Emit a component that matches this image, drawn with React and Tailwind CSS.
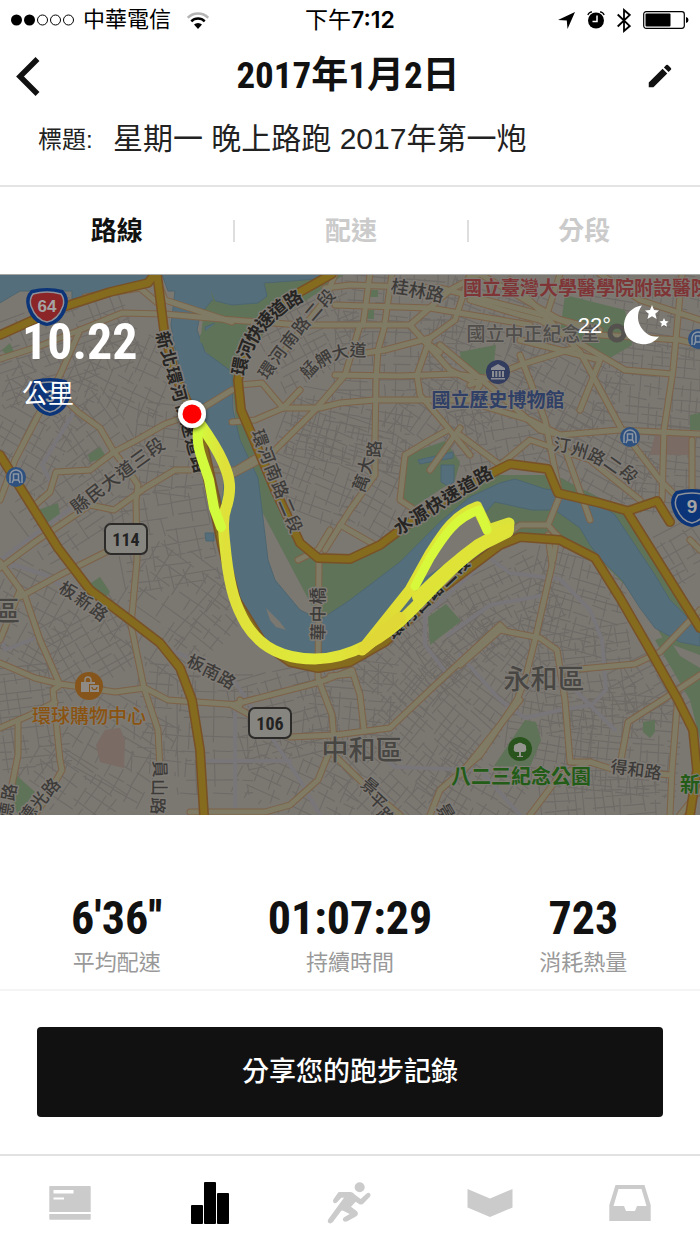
import React from "react";
import { MdEdit } from "react-icons/md";

const NARROW = "font-['Liberation_Sans_Narrow','Roboto_Condensed','Liberation_Sans','Noto_Sans_CJK_TC',sans-serif]";

/* ---------- map geometry ---------- */

const MAJOR = [
  // north-west (Banqiao)
  "M0 359 L40 346 L80 330 L122 313 L165 314 L232 320",
  "M80 330 L60 375 L45 402 L15 460 L0 500",
  "M60 395 L78 412 L100 428 L114 452",
  "M0 640 L20 590",
  "M35 505 L50 492 L56 472 L90 470 L114 452 L137 440 L165 424 L193 414 L232 390",
  "M0 568 L35 542 L90 505 L114 510 L145 488 L175 470 L240 470",
  "M114 452 L128 470 L138 485 L136 500 L137 560 L131 625 L144 688 L158 730 L160 770",
  "M0 562 L25 596 L40 640 L60 685 L53 690 L60 760 L62 770 L45 800 L35 815",
  "M20 597 L60 575 L110 550 L137 540",
  "M0 663 L35 678 L60 684 L115 692 L145 688 L168 700 L240 705 L240 700",
  "M0 728 L30 715 L55 702",
  "M18 722 L18 755 L10 795",
  "M155 274 L165 300 L232 322",
  "M85 297 L140 288 L160 305",
  // Wanhua
  "M232 320 L300 325 L410 325 L425 342 L440 352",
  "M325 288 L350 285 L440 288 L600 330",
  "M335 274 L325 300 L285 350",
  "M370 274 L363 325 M392 274 L385 322",
  "M360 325 L345 375 L315 410 L270 455 L232 475",
  "M385 325 L378 350 L376 380 L375 440",
  "M352 355 L385 350 L430 338 L455 320 L470 274",
  "M335 305 L430 308 L530 325",
  "M410 325 L450 290 L480 274",
  "M425 342 L450 370 L480 385 L470 400 L375 400 L340 403 L320 408 L283 408",
  "M335 375 L400 376 L455 374 L500 380",
  "M240 385 L262 383 L283 408 L255 420 L232 422 M283 408 L300 390",
  "M430 338 L417 375 L420 395 L448 428 L470 455",
  "M440 345 L500 395 L540 430 L560 435 L620 430 L700 434",
  "M470 300 L520 315 L540 320 L625 370 L672 374",
  "M480 274 L560 320 L600 335 L680 340 L700 345",
  "M510 280 L580 352 L622 430 L660 480 L700 520",
  "M520 340 L600 360 L580 410",
  "M470 385 L520 365 L575 348",
  "M480 405 L530 420 L560 435 L590 520",
  "M520 355 L545 420 L560 495 L548 525",
  "M460 435 L500 465 L530 440 L590 460 L640 500",
  "M448 430 L430 440 L405 455 L400 500 L415 510",
  "M460 428 L430 470",
  "M375 440 L375 475 L350 510 L325 550",
  "M232 472 L260 455",
  "M682 274 L673 370 L664 430 L662 500",
  "M560 274 L545 320 M600 274 L640 300 L700 320",
  "M340 525 L375 545",
  "M692 440 L692 500 L700 520",
  "M548 525 L520 525 L500 540 M548 525 L565 545",
  // river crossings and Zhonghe
  "M319 560 L318 678 L332 715 L334 740",
  "M298 560 L318 550 L330 530",
  "M232 705 L320 682 L352 670 L360 695 L364 730",
  "M232 705 L290 737 L335 735 L390 728 L430 690 L500 625 L505 630",
  "M334 740 L318 780 L290 805 L265 812 L190 812",
  "M352 674 L330 676 M334 755 L370 790 L400 815",
  "M460 665 L500 630 L540 638 L557 650 L565 700 L570 762 L590 762 L615 770 L670 775",
  "M548 535 L552 565 L535 640 L525 680 L517 700 L480 755 L440 790 L430 815",
  "M557 535 L553 560",
  "M580 669 L635 664 L660 652 L700 610",
  "M460 775 L520 700",
  "M700 675 L670 695 L628 722 L620 765",
  "M678 695 L672 770 L670 815",
  "M530 815 L560 775 L590 762",
  "M700 790 L680 815 M690 540 L700 550",
];

const HIGHWAY = [
  "M0 335 L60 308 L110 292 L148 283 L155 274",
  "M157 274 L164 330 L175 375 L200 430 L220 520",
  "M0 455 L28 500 L58 548 L90 590 L130 620 L160 643 L180 668 L192 700 L200 750 L204 815",
  "M332 274 L300 292 L265 318 L245 350 L238 380 L241 410 L254 440 L275 490 L300 543 L318 558 L350 559 L380 545 L420 515 L460 490 L492 473 L510 464 L548 469 L558 493 L600 503 L628 511 L657 501 L670 522",
  "M628 513 L700 628",
  "M205 465 L222 545 L236 600 L262 642 L290 662 L318 668 L350 662 L385 642 L440 590 L500 545 L520 537 L560 540 L595 558 L620 598 L650 650 L678 700 L693 730 L697 770 L690 815",
];

const GREY_ROADS = [
  "M0 570 L15 565 L45 575 L80 597 M170 650 L195 660 M0 632 L5 650 L38 637",
  "M0 560 L75 505 M42 465 L75 410 M42 465 L52 485",
  "M235 682 L270 735 L300 780 L320 815 M200 761 L290 761 M235 705 L235 815",
  "M425 610 L425 645 L448 675 M425 615 L470 575 L488 557 L510 573 L560 579 L590 610 L602 640 L606 690 L592 705 L560 710 L525 718 L500 700 L460 655",
  "M575 690 L615 730 M380 755 L395 767 L480 770 L520 815 M448 635 L490 605 L545 595",
];

// Local street grids: centre, half extents, angle, step
const BLOCKS = [
  [60, 345, 75, 42, -20, 9], [125, 370, 48, 42, 25, 8], [30, 430, 42, 55, 30, 9], [95, 440, 45, 35, 55, 9],
  [165, 450, 32, 45, 8, 8], [70, 510, 50, 38, -35, 9], [165, 540, 48, 50, -10, 10], [30, 620, 42, 50, 28, 9],
  [90, 645, 45, 40, -30, 8], [170, 610, 48, 60, 35, 12], [28, 720, 38, 55, -8, 8], [115, 745, 50, 45, 30, 9],
  [165, 720, 30, 55, 5, 10], [215, 735, 38, 60, 0, 12], [70, 790, 50, 28, 35, 9], [210, 625, 22, 40, 40, 9],
  [310, 330, 50, 45, -28, 7], [400, 300, 60, 35, 5, 8], [400, 360, 65, 40, 0, 8], [320, 465, 50, 55, 20, 7],
  [350, 430, 60, 35, 10, 7], [440, 420, 45, 42, 35, 9], [385, 490, 30, 45, 28, 7], [500, 330, 60, 45, 20, 8],
  [560, 380, 60, 45, 30, 8], [500, 430, 50, 35, -10, 7], [640, 310, 60, 40, 8, 8], [650, 390, 55, 45, 5, 8],
  [600, 460, 55, 35, 28, 7], [665, 470, 40, 45, 5, 7], [670, 560, 38, 28, -30, 8],
  [285, 715, 50, 45, -15, 9], [350, 705, 45, 45, 5, 8], [400, 665, 50, 40, 40, 8], [450, 640, 42, 45, -35, 8],
  [510, 600, 45, 38, -25, 7], [575, 600, 48, 50, 15, 7], [490, 665, 50, 45, 38, 7], [585, 680, 50, 50, -8, 7],
  [430, 735, 55, 45, 40, 7], [300, 785, 60, 35, 25, 8], [380, 790, 50, 30, 42, 8], [470, 790, 50, 32, 30, 7],
  [550, 740, 45, 45, 10, 7], [630, 745, 50, 50, 5, 7], [600, 795, 60, 25, -5, 7], [650, 690, 35, 35, -30, 8],
];

function buildStreets() {
  let seed = 7;
  const rnd = () => {
    seed = (seed * 16807) % 2147483647;
    return seed / 2147483647;
  };
  let d = "";
  for (const [cx, cy, hw, hh, angle, step] of BLOCKS) {
    const a = (angle * Math.PI) / 180;
    const c = Math.cos(a);
    const s = Math.sin(a);
    const put = (x1, y1, x2, y2) => {
      const p = (x, y) => `${(cx + x * c - y * s).toFixed(1)} ${(cy + x * s + y * c).toFixed(1)}`;
      d += `M${p(x1, y1)}L${p(x2, y2)}`;
    };
    for (let y = -hh; y < hh; y += step * (0.8 + rnd() * 0.9)) {
      let x = -hw + rnd() * 12;
      while (x < hw) {
        const len = 14 + rnd() * 42;
        put(x, y, Math.min(x + len, hw), y + rnd() * 3 - 1);
        x += len + rnd() * 14;
      }
    }
    for (let x = -hw; x < hw; x += step * (0.9 + rnd() * 1.1)) {
      let y = -hh + rnd() * 12;
      while (y < hh) {
        const len = 10 + rnd() * 30;
        put(x, y, x + rnd() * 3 - 1, Math.min(y + len, hh));
        y += len + rnd() * 16;
      }
    }
  }
  return d;
}
const STREETS = buildStreets();

/* Road name whose characters run from one point to another, each turned by its own angle. */
function RoadName({ text, from, to, bend = 0, turn, size = 17, bold = false, dark = false }) {
  const chars = Array.from(text);
  const n = chars.length;
  const dx = to[0] - from[0];
  const dy = to[1] - from[1];
  const len = Math.hypot(dx, dy);
  const xs = [];
  const ys = [];
  const rs = [];
  chars.forEach((_, i) => {
    const t = n === 1 ? 0 : i / (n - 1);
    const off = bend * 4 * t * (1 - t);
    const mx = from[0] + dx * t - (dy / len) * off;
    const my = from[1] + dy * t + (dx / len) * off;
    const deg = turn[0] + (turn[1] - turn[0]) * t;
    const r = (deg * Math.PI) / 180;
    const ox = -size / 2;
    const oy = size * 0.37;
    xs.push((mx + ox * Math.cos(r) - oy * Math.sin(r)).toFixed(1));
    ys.push((my + ox * Math.sin(r) + oy * Math.cos(r)).toFixed(1));
    rs.push(deg.toFixed(1));
  });
  return (
    <text
      x={xs.join(" ")}
      y={ys.join(" ")}
      rotate={rs.join(" ")}
      fontSize={size}
      fontWeight={bold ? 700 : 500}
      fill={dark ? "#262523" : "#3d3b39"}
      stroke="#807c76"
      strokeWidth="3"
      paintOrder="stroke"
      strokeLinejoin="round"
    >
      {text}
    </text>
  );
}

function PlaceName({ x, y, size, fill, weight = 500, children, anchor = "middle" }) {
  return (
    <text x={x} y={y} fontSize={size} fontWeight={weight} fill={fill} textAnchor={anchor} stroke="#807c76" strokeWidth="2" paintOrder="stroke">
      {children}
    </text>
  );
}

function Metro({ x, y }) {
  return (
    <g transform={`translate(${x} ${y})`} fill="none" stroke="#8c96a3" strokeWidth="1.5">
      <circle r="10" fill="#2f517f" stroke="none" />
      <path d="M-6 6V-1a6 6 0 0 1 12 0V6" />
      <rect x="-2.5" y="-3" width="5" height="6" />
      <path d="M-2.5 3L-4 6M2.5 3L4 6" />
    </g>
  );
}

function RouteBox({ x, y, label }) {
  return (
    <g>
      <rect x={x - 21} y={y - 15} width="42" height="30" rx="6" fill="#86857f" stroke="#2c2b2a" strokeWidth="2" />
      <text x={x} y={y + 7} textAnchor="middle" fontSize="18" fontWeight="700" fill="#222" className={NARROW}>
        {label}
      </text>
    </g>
  );
}

function Shield({ x, y, label, inner, fontSize = 17 }) {
  return (
    <g transform={`translate(${x} ${y})`}>
      <path d="M-16 -17Q0 -21 16 -17Q23 -10 20 0Q15 17 0 19Q-15 17 -20 0Q-23 -10 -16 -17Z" fill="#0c3478" />
      <path d="M-14 -13Q0 -17 14 -13Q18 -8 16 -1Q11 13 0 15Q-11 13 -16 -1Q-18 -8 -14 -13Z" fill={inner} stroke="#8f9299" strokeWidth="1.5" />
      <text y="5" textAnchor="middle" fontSize={fontSize} fontWeight="700" fill="#a4a4a4">
        {label}
      </text>
    </g>
  );
}

function RouteMap() {
  return (
    <svg
      viewBox="0 274 700 541"
      className="block w-full bg-[#7b7771] font-['Liberation_Sans','Noto_Sans_CJK_TC',sans-serif]"
      role="img"
      aria-label="路線"
    >
      <defs>
        <linearGradient id="pace" gradientUnits="userSpaceOnUse" x1="200" y1="0" x2="515" y2="0">
          <stop offset="0" stopColor="#d4f83e" />
          <stop offset="0.08" stopColor="#dfe03a" />
          <stop offset="0.35" stopColor="#dfe93a" />
          <stop offset="0.57" stopColor="#e0da36" />
          <stop offset="0.75" stopColor="#dde637" />
          <stop offset="1" stopColor="#dbe23a" />
        </linearGradient>
        <filter id="pinShadow" x="-50%" y="-50%" width="200%" height="200%">
          <feDropShadow dx="0" dy="2" stdDeviation="2" floodOpacity="0.6" />
        </filter>
      </defs>

      <path d={STREETS} stroke="#6e6a66" strokeWidth="1.1" fill="none" />

      {/* parks and pinkish plots */}
      <g fill="#5f7358">
        <path d="M205 300L240 274H345L270 325L245 360L238 400L255 445L300 545L320 557L352 557L430 510L495 475L555 475L625 511L700 630V700L640 600L590 550L520 535L470 560L330 640L240 470L232 380L200 345Z" />
        <path d="M405 455L445 441L460 462L455 480L412 508L397 500Z" />
        <path d="M565 295L625 310L632 345L610 358L560 330Z" />
        <path d="M460 352L480 348L496 345L494 362L482 378L462 368Z" />
        <path d="M428 617L446 604L461 621L430 645Z" />
        <path d="M494 766L525 720L536 722L541 740L530 767Z" />
        <path d="M88 585L100 577L110 592L102 602Z" />
        <path d="M35 511L58 503L60 515L50 527Z" />
        <path d="M88 455L100 447L107 458L90 462Z" />
        <path d="M2 350L10 343L14 352L8 357Z" />
        <path d="M16 775L35 792L18 815L12 800Z" />
        <path d="M643 722L655 720L655 732L650 738L643 732Z" />
        <path d="M366 310H374V319H366Z M370 290H378V297H370Z M690 415L700 413V430H690Z" />
        <path d="M655 640L700 625V740L690 700Z" />
      </g>
      <path d="M655 435H690V455H650Z M105 730L120 728L125 740L124 768L100 762L96 745Z" fill="#7a6b64" />

      {/* water */}
      <g fill="#546e7b" stroke="#4d6671" strokeWidth="1">
        <path d="M-2 272H156L150 286L72 299V291L20 291L-2 304Z" />
        <path d="M161 272H332L315 279L292 281L264 283L267 296L258 303L232 305L212 300L200 315L197 330L205 352L232 372L233 410L240 440L258 478L262 510L268 560L275 580L300 610L320 620L350 600L400 562L440 522L470 497L500 483L515 479L545 489L588 495L615 515L635 545L655 575L670 600L700 630V646L680 642L655 628L640 608L622 580L600 558L590 545L580 528L555 510L532 510L495 502L465 535L440 580L400 618L350 652L310 657L270 648L244 620L230 580L222 520L213 480L205 440L187 390L176 355L171 325L175 291H168Z" />
        <path d="M418 460L440 455L453 452V458L430 462L420 464Z M441 465H454V482L448 486L441 482Z M205 327L215 323V335L206 334Z M205 533H214V541H206Z" />
      </g>
      <path d="M211 291Q224 318 212 326L200 335V342L230 360V307L214 304Z" fill="#5f7358" />
      <path d="M266 608L280 622L286 630L276 627L270 620Z M628 595L640 610L655 630L655 640L645 632Z M673 645L700 655V668L680 656Z" fill="#7b7771" />
      <path d="M495 508L530 512L529 530L545 535L505 540Z" fill="#5f7358" />
      <path d="M484 512L478 508L446 535L424 578L482 540L504 530L486 530Z M206 447L211 444L224 478L222 500L212 476Z" fill="#7b7771" />

      {/* roads */}
      <g fill="none" strokeLinejoin="round" strokeLinecap="round">
        {GREY_ROADS.map((d) => (
          <path key={d} d={d} stroke="#797679" strokeWidth="4" />
        ))}
        {MAJOR.map((d) => (
          <path key={d} d={d} stroke="#7d6249" strokeWidth="7" />
        ))}
        {MAJOR.map((d) => (
          <path key={d} d={d} stroke="#7f7b64" strokeWidth="5" />
        ))}
        {HIGHWAY.map((d) => (
          <path key={d} d={d} stroke="#785127" strokeWidth="10" />
        ))}
        {HIGHWAY.map((d) => (
          <path key={d} d={d} stroke="#846b1e" strokeWidth="7" />
        ))}
      </g>

      {/* road names */}
      <RoadName text="新北環河快速道路" from={[164, 340]} to={[199, 464]} turn={[76, 74]} bold dark size={17} />
      <RoadName text="環河快速道路" from={[240, 366]} to={[293, 299]} bend={-9} turn={[-78, -32]} bold dark size={18} />
      <RoadName text="環河南路二段" from={[267, 370]} to={[326, 298]} bend={-2} turn={[-55, -48]} />
      <RoadName text="艋舺大道" from={[309, 369]} to={[358, 350]} bend={-5} turn={[-48, 2]} />
      <RoadName text="桂林路" from={[400, 287]} to={[435, 294]} turn={[8, 12]} size={18} />
      <RoadName text="環河南路二段" from={[260, 438]} to={[294, 524]} turn={[70, 66]} />
      <RoadName text="萬大路" from={[361, 483]} to={[374, 449]} bend={-2} turn={[-68, -88]} />
      <RoadName text="水源快速道路" from={[403, 525]} to={[483, 475]} turn={[-34, -28]} bold dark size={18} />
      <RoadName text="汀州路二段" from={[562, 445]} to={[629, 474]} bend={-3} turn={[8, 45]} />
      <RoadName text="縣民大道三段" from={[80, 504]} to={[155, 447]} turn={[-38, -35]} size={18} />
      <RoadName text="板新路" from={[68, 590]} to={[99, 612]} turn={[30, 38]} />
      <RoadName text="板南路" from={[196, 663]} to={[227, 680]} turn={[22, 30]} />
      <RoadName text="華中橋" from={[318, 632]} to={[318, 596]} turn={[-88, -90]} />
      <RoadName text="環河西路二段" from={[395, 630]} to={[461, 565]} turn={[-48, -42]} bold dark size={16} />
      <RoadName text="員山路" from={[160, 769]} to={[158, 806]} turn={[88, 92]} />
      <RoadName text="德光路" from={[28, 814]} to={[51, 787]} turn={[-55, -48]} />
      <RoadName text="四德路" from={[3, 830]} to={[9, 792]} turn={[-80, -80]} />
      <RoadName text="景平路" from={[370, 786]} to={[386, 816]} turn={[40, 48]} />
      <RoadName text="得和路" from={[619, 767]} to={[653, 772]} turn={[6, 8]} />
      <RoadName text="景新街" from={[446, 812]} to={[460, 838]} turn={[60, 60]} />

      {/* places */}
      <PlaceName x="463" y="295" size="19" weight="700" fill="#7f3436" anchor="start">國立臺灣大學醫學院附設醫院</PlaceName>
      <PlaceName x="533" y="341" size="19" fill="#504e4b">國立中正紀念堂</PlaceName>
      <circle cx="617" cy="333" r="7" fill="none" stroke="#54514f" strokeWidth="5" />
      <PlaceName x="498" y="407" size="19" weight="700" fill="#2f3f66">國立歷史博物館</PlaceName>
      <g transform="translate(498 372)" fill="#8c8d92">
        <circle r="12" fill="#323c5e" />
        <path d="M-7 -4L0 -8L7 -4V-2H-7ZM-6 -1H-4V5H-6ZM-2.700 -1H-.700V5H-2.700ZM.700 -1H2.700V5H.700ZM4 -1H6V5H4ZM-7 6H7V7.500H-7Z" />
      </g>
      <Metro x={16} y={477} />
      <Metro x={630} y={437} />
      <Metro x={698} y={339} />
      <PlaceName x="544" y="689" size="27" fill="#484643">永和區</PlaceName>
      <PlaceName x="362" y="760" size="27" fill="#484643">中和區</PlaceName>
      <PlaceName x="20" y="621" size="27" fill="#484643" anchor="end">板橋區</PlaceName>
      <PlaceName x="89" y="723" size="19" fill="#8b5310">環球購物中心</PlaceName>
      <g transform="translate(89 686)">
        <circle r="14" fill="#85551b" />
        <path d="M-8 -4H6V-2H0V6H-8ZM1 -1H10V6H1Z" fill="#8f8a83" />
        <path d="M-4 -4V-6a3 3 0 0 1 6 0V-4" fill="none" stroke="#8f8a83" strokeWidth="1.500" />
        <path d="M3 1a2.500 2.500 0 0 0 5 0" fill="none" stroke="#85551b" strokeWidth="1.200" />
      </g>
      <PlaceName x="521" y="784" size="20" weight="700" fill="#225c17">八二三紀念公園</PlaceName>
      <g transform="translate(520 749)">
        <circle r="12" fill="#2a541d" />
        <path d="M-1 7V3H-4a3 3 0 0 1-2-4a3 3 0 0 1 3-4a4 4 0 0 1 6 0a3 3 0 0 1 3 4a3 3 0 0 1-2 4H1V7H3V8H-3V7Z" fill="#94958e" />
      </g>
      <PlaceName x="680" y="792" size="20" weight="700" fill="#225c17" anchor="start">新店溪</PlaceName>
      <RouteBox x={126} y={539} label="114" />
      <RouteBox x={270} y={723} label="106" />
      <Shield x={47} y={307} label="64" inner="#8c2527" />
      <Shield x={50} y={397} label="3" inner="#0c3478" />
      <Shield x={692} y={508} label="9" inner="#0c3478" fontSize={19} />

      {/* recorded run */}
      <g fill="none" strokeLinejoin="round" strokeLinecap="round">
        <path d="M198 421C208 435 216 446 223 462C231 480 231 490 227 505C221 520 224 535 226 555C230 590 236 607 246 624C261 648 283 659 315 659C350 659 385 638 410 612C432 590 458 560 484 544L508 532L509 523L488 530L477 507C455 515 444 532 430 554L410 590L362 650" stroke="url(#pace)" strokeWidth="11" />
        <path d="M364 648L400 618" stroke="#e0d836" strokeWidth="12" />
        <path d="M418 597C435 580 460 558 478 545L508 529" stroke="#dfe338" strokeWidth="12" />
        <path d="M487 530L479 510C455 518 444 536 430 558L415 586" stroke="#d8f83c" strokeWidth="9" />
        <path d="M198 430C196 448 203 460 209 480L214 508L221 527" stroke="#d3fb3e" strokeWidth="10" />
      </g>
      <g>
        <circle cx="192" cy="414" r="14" fill="#fff" filter="url(#pinShadow)" />
        <circle cx="192" cy="414" r="9.500" fill="#fe0000" />
      </g>
      <path d="M0 274.500H700" stroke="#a6a6a6" />
    </svg>
  );
}

/* ---------- icons ---------- */

function MoonIcon() {
  return (
    <svg viewBox="0 0 46 40" className="h-10 w-[46px]" fill="#fff" aria-hidden="true">
      <path d="M19 0.500C13 8 14 18 20 25C24 30 30 32.500 36 31.500C31 38 24 40 18 39C7 38 0 29 1 19C2 9 9 2 19 0.500Z" />
      <path d="M29 0L31 5L36 5.400L32.300 8.800L33.600 14L29 11.200L24.400 14L25.700 8.800L22 5.400L27 5Z" />
      <path d="M41 13L42.300 16L45.600 16.400L43.200 18.500L44 21.800L41 20L38 21.800L38.800 18.500L36.400 16.400L39.700 16Z" />
    </svg>
  );
}

const navItems = [
  {
    label: "動態",
    icon: (
      <svg viewBox="0 0 42 34" className="h-[34px] w-[42px]" fill="#cbcbcb">
        <path fillRule="evenodd" d="M1 0H41a.7.7 0 0 1 .7.7V26H.3V.700A.7.7 0 0 1 1 0ZM4.500 4V7.500H24.500V4ZM4.500 11.500V13.500H15V11.500Z" />
        <path d="M.3 28H41.700V33a.7.7 0 0 1-.7.700H1a.7.7 0 0 1-.7-.7Z" />
      </svg>
    ),
  },
  {
    label: "活動",
    active: true,
    icon: (
      <svg viewBox="0 0 38 42" className="h-[42px] w-[38px]" fill="#000">
        <rect x="0" y="23" width="12" height="19" rx="1" />
        <rect x="13" y="0" width="12" height="42" rx="1" />
        <rect x="26" y="11" width="12" height="31" rx="1" />
      </svg>
    ),
  },
  {
    label: "跑步",
    icon: (
      <svg viewBox="0 0 180 168" className="h-14 w-[60px]" fill="#cbcbcb">
        <circle cx="119" cy="37" r="15" />
        <path d="M58 51H92Q99 51 105 59L122 72L139 56Q147 50 151 57Q153 61 149 66L131 85Q124 92 116 86L107 80L93 95L110 108Q118 116 109 124L82 139Q72 143 69 136Q67 129 75 125L89 117L71 108Q65 104 61 111L38 142Q31 148 25 143Q21 138 25 133L72 68H64L52 81Q45 88 40 82Q37 78 41 72L53 55Q55 51 58 51Z" />
      </svg>
    ),
  },
  {
    label: "計畫",
    icon: (
      <svg viewBox="0 0 46 28" className="h-7 w-[46px]" fill="#cbcbcb">
        <path d="M.5 0L23 9.500L45.500 0V18.500L23 28L.5 18.500Z" />
      </svg>
    ),
  },
  {
    label: "收件匣",
    icon: (
      <svg viewBox="0 0 42 36" className="h-9 w-[42px]" fill="#cbcbcb">
        <path fillRule="evenodd" d="M6.500 0H35.500L41.700 20V36H.3V20ZM9.500 4L4.500 21H15L17 26H26L28 21H37.500L32.500 4Z" />
      </svg>
    ),
  },
];

const stats = [
  { value: "6'36''", label: "平均配速" },
  { value: "01:07:29", label: "持續時間" },
  { value: "723", label: "消耗熱量" },
];

const tabs = ["路線", "配速", "分段"];

function StatusBar() {
  return (
    <div className="grid h-10 grid-cols-3 items-center px-[11px] text-black">
      <div className="flex items-center">
        <svg viewBox="0 0 64 12" className="h-3 w-16" aria-hidden="true">
          <circle cx="5.500" cy="6" r="5.500" />
          <circle cx="18.500" cy="6" r="5.500" />
          <g fill="none" stroke="#000" strokeWidth="1">
            <circle cx="31.500" cy="6" r="5" />
            <circle cx="44.500" cy="6" r="5" />
            <circle cx="57.500" cy="6" r="5" />
          </g>
        </svg>
        <span className="ml-2 text-[22px] leading-8">中華電信</span>
        <svg viewBox="0 0 22 17" className="ml-4 h-[17px] w-[22px]" fill="none" aria-hidden="true">
          <path d="M.8 5.800A14.500 14.500 0 0 1 21.200 5.800" stroke="#b5b5b5" strokeWidth="2.500" />
          <path d="M4.300 9.300A9.500 9.500 0 0 1 17.700 9.300" stroke="#000" strokeWidth="2.500" />
          <path d="M7 12.600A5.700 5.700 0 0 1 15 12.600L11 17Z" fill="#000" />
        </svg>
      </div>
      <div className="text-center text-[23px] leading-8">
        下午<span className="font-['Inter',sans-serif] font-semibold">7:12</span>
      </div>
      <div className="flex items-center justify-end">
        <svg viewBox="0 0 17 17" className="h-[17px] w-[17px]" aria-hidden="true">
          <path d="M0 8L17 0L9.500 17L8.800 8.500Z" />
        </svg>
        <svg viewBox="0 0 18 18" className="ml-3 h-[18px] w-[18px]" fill="none" aria-hidden="true">
          <circle cx="9" cy="9.500" r="8" fill="#000" />
          <path d="M10 4.500V10.500H5.500" stroke="#fff" strokeWidth="1.500" />
          <path d="M.8 4Q2 1 5 .8M17.200 4Q16 1 13 .8" stroke="#000" strokeWidth="1.200" />
        </svg>
        <svg viewBox="0 0 14 25" className="ml-3 h-[25px] w-[14px]" fill="none" stroke="#000" strokeWidth="1.800" aria-hidden="true">
          <path d="M.7 6.500L12.800 18L7 23V2L12.800 7L.7 18.500" />
        </svg>
        <svg viewBox="0 0 46 18" className="ml-3 h-[18px] w-[46px]" aria-hidden="true">
          <rect x=".7" y=".7" width="40.600" height="16.600" rx="2.500" fill="none" stroke="#000" strokeWidth="1.200" />
          <rect x="2.500" y="2.500" width="25" height="13" rx="1" />
          <path d="M43 6Q45.500 6.500 45.500 9T43 12Z" />
        </svg>
      </div>
    </div>
  );
}

export default function App() {
  return (
    <div className="flex min-h-screen w-full flex-col bg-white font-['Liberation_Sans','Noto_Sans_CJK_TC',sans-serif] text-[#111]">
      <StatusBar />

      <header className="border-b-2 border-[#e4e4e4]">
        <div className="flex h-[72px] items-center justify-between pr-5 pl-4">
          <button type="button" aria-label="返回" className="w-10">
            <svg viewBox="0 0 24 40" className="h-10 w-6" fill="none" stroke="#111" strokeWidth="5.500">
              <path d="M21.500 3L4 20.500L21.500 38" />
            </svg>
          </button>
          <h1 className={`${NARROW} text-[37px] leading-[48px] font-bold`}>2017年1月2日</h1>
          <button type="button" aria-label="編輯" className="flex w-10 justify-center">
            <MdEdit className="size-[30px]" />
          </button>
        </div>
        <p className="flex h-[73px] items-start px-[38px] pt-1 text-[#222]">
          <span className="w-[75px] text-[24px] leading-[48px]">標題:</span>
          <span className="text-[30px] leading-[46px]">星期一 晚上路跑 2017年第一炮</span>
        </p>
      </header>

      <div role="tablist" className="grid h-[87px] grid-cols-3 items-center">
        {tabs.map((tab, i) => (
          <button
            key={tab}
            type="button"
            role="tab"
            aria-selected={i === 0}
            className={`h-[22px] border-[#dedede] text-[26px] leading-[22px] font-bold ${i === 0 ? "text-[#111]" : "border-l-2 text-[#cbcbcb]"}`}
          >
            {tab}
          </button>
        ))}
      </div>

      <section className="relative">
        <RouteMap />
        <div className="absolute top-9 left-[22px] text-white">
          <div className={`${NARROW} text-[50px] leading-[64px] font-bold`}>10.22</div>
          <div className="text-[26px] leading-10">公里</div>
        </div>
        <div className="absolute top-[31px] right-[31px] flex items-center gap-3 text-white">
          <span className="text-[22px]">22°</span>
          <MoonIcon />
        </div>
      </section>

      <dl className="grid grid-cols-3 border-b-2 border-[#f4f4f4] pt-[74px] pb-[10px] text-center">
        {stats.map((s) => (
          <div key={s.label} className="flex flex-col-reverse">
            <dt className="text-[22px] leading-8 text-[#999]">{s.label}</dt>
            <dd className={`${NARROW} text-[46px] leading-[58px] font-bold`}>{s.value}</dd>
          </div>
        ))}
      </dl>

      <div className="px-[37px] pt-9 pb-[37px]">
        <button type="button" className="h-[90px] w-full rounded bg-[#111] text-[27px] font-medium text-white">
          分享您的跑步記錄
        </button>
      </div>

      <nav className="mt-auto grid h-[91px] grid-cols-5 border-t-2 border-[#e2e2e2] pt-1">
        {navItems.map((item) => (
          <a
            key={item.label}
            href="#"
            aria-label={item.label}
            aria-current={item.active ? "page" : undefined}
            className="flex items-center justify-center"
          >
            {item.icon}
          </a>
        ))}
      </nav>
    </div>
  );
}
